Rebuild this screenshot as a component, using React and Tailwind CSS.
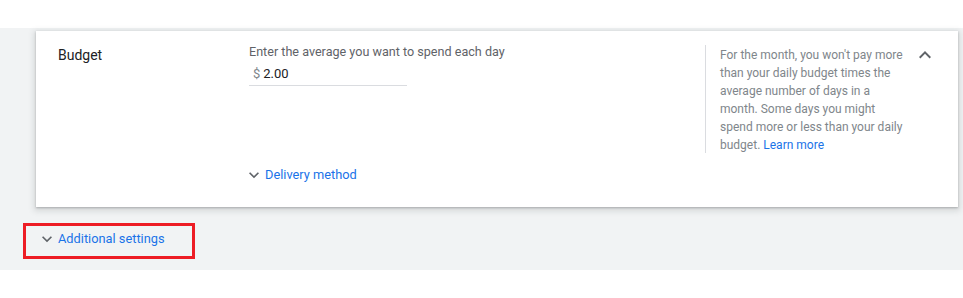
export default function App() {
  const Down = ({ cls }) => (
    <svg width="20" height="20" viewBox="0 0 24 24" className={cls}><path d="M7.41 8.59L12 13.17l4.59-4.58L18 10l-6 6-6-6 1.41-1.41z" fill="#5f6368"/></svg>
  );
  return (
    <div className="w-[963px] h-[298px] bg-white font-['Roboto',sans-serif] overflow-hidden">
      <div className="h-[28px]" />
      <div className="bg-[#f1f3f4] h-[242px] pt-[3px] pl-[36px] pr-[5px]">
        <div className="bg-white h-[176px] shadow-[0_1px_2px_rgba(60,64,67,0.3),0_2px_6px_2px_rgba(60,64,67,0.15)] flex">
          <div className="w-[213px] pl-[22px] pt-[14px] text-[14px] text-[#202124]">Budget</div>
          <div className="w-[456px] pt-[13px] flex flex-col">
            <div className="text-[12.6px] text-[#5f6368] leading-[16px]">Enter the average you want to spend each day</div>
            <div className="w-[158px] mt-[5px] h-[21px] border-b border-[#dadce0] flex items-start pl-[4px] text-[13px] leading-[18px]">
              <span className="text-[#80868b] mr-[3px]">$</span>
              <span className="text-[#202124]">2.00</span>
            </div>
            <div className="mt-[79px] flex items-center text-[12.8px] text-[#1a73e8]">
              <Down cls="ml-[-5px] mr-[1px]" />
              Delivery method
            </div>
          </div>
          <div className="mt-[14px] h-[108px] border-l border-[#dadce0] pl-[14px] w-[200px] text-[12px] leading-[18px] text-[#80868b] pt-[1px]">
            For the month, you won't pay more than your daily budget times the average number of days in a month. Some days you might spend more or less than your daily budget. <span className="text-[#1a73e8]">Learn more</span>
          </div>
          <div className="pt-[12px] pl-[8px]">
            <svg width="24" height="24" viewBox="0 0 24 24"><path d="M7.41 15.41L12 10.83l4.59 4.58L18 14l-6-6-6 6z" fill="#5f6368"/></svg>
          </div>
        </div>
        <div className="mt-[16px] ml-[-13px] w-[172px] h-[36px] border-[3px] border-[#ed1c24] flex items-center pl-[11px] pb-[4px] text-[12.8px] text-[#1a73e8]">
          <Down cls="mr-[1px]" />
          Additional settings
        </div>
      </div>
    </div>
  );
}
